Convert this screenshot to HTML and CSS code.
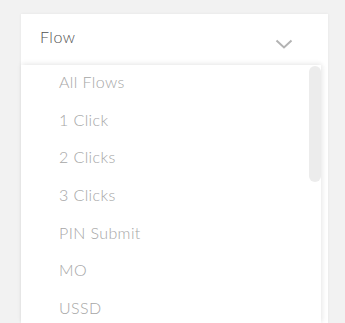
FILE: index.html
```html
<!DOCTYPE html>
<html lang="en">
<head>
    <meta charset="UTF-8">
    <meta name="viewport" content="width=device-width, initial-scale=1.0">
    <title>Flow Filter</title>
    <link rel="stylesheet" href="styles.css">
</head>
<body>
    <div class="select">
        <div class="select-header">
            <span class="select-label">Flow</span>
            <svg class="chevron" width="18" height="10" viewBox="0 0 18 10">
                <path d="M1.5 1.5 L9 8.5 L16.5 1.5" fill="none" stroke="#b3b3b3" stroke-width="2"/>
            </svg>
        </div>

        <div class="select-menu">
            <ul class="option-list">
                <li class="option">All Flows</li>
                <li class="option">1 Click</li>
                <li class="option">2 Clicks</li>
                <li class="option">3 Clicks</li>
                <li class="option">PIN Submit</li>
                <li class="option">MO</li>
                <li class="option">USSD</li>
            </ul>
            <div class="scroll-thumb"></div>
        </div>
    </div>
</body>
</html>
```

FILE: styles.css
```css
* {
    margin: 0;
    padding: 0;
    box-sizing: border-box;
    font-family: Lato, 'Open Sans', sans-serif;
}

body {
    background: #f2f2f2;
    height: 100vh;
    overflow: hidden;
}

.select {
    position: relative;
    margin: 14px 0 0 21px;
    width: 307px;
    height: 309px;
    background: #ffffff;
    box-shadow: 0 0 3px rgba(0, 0, 0, 0.06);
}

.select-header {
    height: 51px;
    display: flex;
    justify-content: space-between;
    padding: 12px 35px 0 19px;
}

.select-label {
    font-size: 16px;
    line-height: 22px;
    font-weight: 300;
    color: #4f4f4f;
    letter-spacing: 0.5px;
}

.chevron {
    margin-top: 13px;
}

.select-menu {
    position: absolute;
    top: 51px;
    left: 0;
    bottom: 0;
    width: 300px;
    background: #ffffff;
    box-shadow: 0 -2px 5px rgba(0, 0, 0, 0.05), 2px 0 5px rgba(0, 0, 0, 0.06);
    overflow: hidden;
}

.option-list {
    list-style: none;
    margin-top: -2px;
}

.option {
    height: 37.7px;
    line-height: 37.7px;
    padding-left: 38px;
    font-size: 16px;
    font-weight: 300;
    color: #a6a6a6;
    letter-spacing: 0.4px;
}

.scroll-thumb {
    position: absolute;
    top: 1px;
    right: 0;
    width: 12px;
    height: 116px;
    border-radius: 6px;
    background: #ececec;
}
```
